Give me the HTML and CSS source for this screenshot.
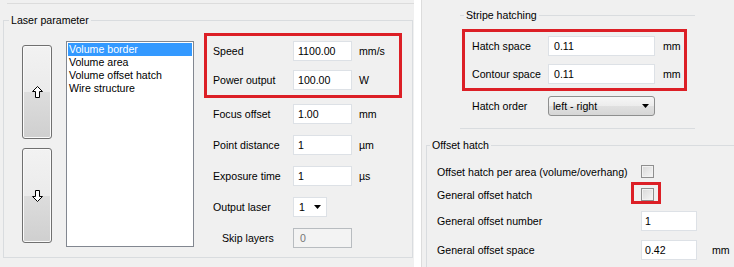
FILE: index.html
```html
<!DOCTYPE html>
<html>
<head>
<meta charset="utf-8">
<link rel="stylesheet" href="styles.css">
</head>
<body>
<div class="screen">
  <section class="panel panel-left">
    <div class="topline"></div>
    <div class="group group-laser">
      <span class="group-title">Laser parameter</span>
      <div class="movers">
        <button class="btn btn-up" type="button">
          <svg width="11" height="12" viewBox="0 0 11 12"><path d="M5.5 .5 L10.5 5.5 H7.5 V11.5 H3.5 V5.5 H.5 Z" fill="#fff" stroke="#000" stroke-width="1"/></svg>
        </button>
        <button class="btn btn-down" type="button">
          <svg width="11" height="12" viewBox="0 0 11 12"><path d="M5.5 11.5 L10.5 6.5 H7.5 V.5 H3.5 V6.5 H.5 Z" fill="#fff" stroke="#000" stroke-width="1"/></svg>
        </button>
      </div>
      <ul class="listbox">
        <li class="sel">Volume border</li>
        <li>Volume area</li>
        <li>Volume offset hatch</li>
        <li>Wire structure</li>
      </ul>
      <div class="form">
        <div class="red">
          <div class="row"><span>Speed</span><span class="field">1100.00</span><span>mm/s</span></div>
          <div class="row"><span>Power output</span><span class="field">100.00</span><span>W</span></div>
        </div>
        <div class="row"><span>Focus offset</span><span class="field">1.00</span><span>mm</span></div>
        <div class="row"><span>Point distance</span><span class="field">1</span><span>µm</span></div>
        <div class="row"><span>Exposure time</span><span class="field">1</span><span>µs</span></div>
        <div class="row"><span>Output laser</span><span class="mini-combo"><span>1</span><svg class="tri" width="7" height="4" viewBox="0 0 7 4"><polygon points="0,0 7,0 3.5,4" fill="#000"/></svg></span><span></span></div>
        <div class="row"><span class="indent">Skip layers</span><span class="field disabled">0</span><span></span></div>
      </div>
    </div>
  </section>
  <div class="gap"></div>
  <section class="panel panel-right">
    <div class="group stripe">
      <span class="group-title">Stripe hatching</span>
      <div class="red">
        <div class="row"><span>Hatch space</span><span class="field">0.11</span><span>mm</span></div>
        <div class="row"><span>Contour space</span><span class="field">0.11</span><span>mm</span></div>
      </div>
      <div class="row"><span>Hatch order</span><span class="combo"><span>left - right</span><svg class="tri" width="7" height="4" viewBox="0 0 7 4"><polygon points="0,0 7,0 3.5,4" fill="#000"/></svg></span><span></span></div>
    </div>
    <div class="group offset">
      <span class="group-title">Offset hatch</span>
      <div class="row r-check"><span>Offset hatch per area (volume/overhang)</span><span class="cell"><span class="check"></span></span><span></span></div>
      <div class="row r-check"><span>General offset hatch</span><span class="cell"><span class="check"><span class="ring"></span></span></span><span></span></div>
      <div class="row r-num"><span>General offset number</span><span class="field">1</span><span></span></div>
      <div class="row r-space"><span>General offset space</span><span class="field">0.42</span><span>mm</span></div>
    </div>
  </section>
</div>
</body>
</html>
```

FILE: styles.css
```css
* { box-sizing: border-box; }
html, body { margin: 0; padding: 0; }
body {
  width: 734px;
  height: 267px;
  overflow: hidden;
  background: #fff;
  font-family: "Liberation Sans", Arial, sans-serif;
  font-size: 10.6px;
  color: #000;
}
.screen { display: flex; height: 267px; }
.panel { background: #f0f0f0; height: 267px; }
.panel-left { width: 414px; padding-top: 3px; }
.topline { margin-left: 7px; border-top: 1px solid #dcdcdc; }
.gap { width: 7px; background: #fff; }
.panel-right { width: 313px; border-left: 1px solid #dcdcdc; }

.group { position: relative; border: 1px solid #d9dcdf; }
.group-title {
  position: absolute;
  top: -7px;
  line-height: 13px;
  padding: 0 2px;
  background: #f0f0f0;
  white-space: nowrap;
}

/* left group */
.group-laser {
  margin: 16px 0 0 3px;
  width: 410px;
  height: 238px;
  display: flex;
  align-items: flex-start;
}
.group-laser .group-title { left: 5px; }

.movers {
  margin: 24px 0 0 18px;
  display: flex;
  flex-direction: column;
  gap: 9px;
}
.btn {
  width: 30px;
  padding: 0;
  border: 1px solid #707070;
  border-radius: 3px;
  background: linear-gradient(#f2f2f2 0%, #ebebeb 50%, #dddddd 50%, #cfcfcf 100%);
  box-shadow: inset 0 0 0 1px #fafafa;
  display: flex;
  align-items: center;
  justify-content: center;
}
.btn-up { height: 94px; }
.btn-down { height: 95px; }

.listbox {
  margin: 20px 0 0 14px;
  padding: 1px;
  width: 128px;
  height: 206px;
  border: 1px solid #828790;
  background: #fff;
  list-style: none;
}
.listbox li {
  height: 13px;
  line-height: 13px;
  padding-left: 1px;
  white-space: nowrap;
}
.listbox li.sel { background: #3399ff; color: #fff; }

.form { margin: 12px 0 0 10px; width: 198px; }
.red { border: 3px solid #dc1f26; }
.form .red { padding-left: 6px; }
.row { display: grid; align-items: center; white-space: nowrap; }
.form .row {
  grid-template-columns: 73px 59px auto;
  column-gap: 7px;
  height: 31px;
}
.form .red .row:first-child { height: 29px; }
.form .red .row:last-child { height: 30px; }
.form > .row { margin-left: 9px; }
.indent { padding-left: 9px; }

.field {
  height: 20px;
  border: 1px solid #dde1e6;
  background: #fff;
  padding-left: 4px;
  line-height: 18px;
}
.field.disabled {
  background: #f3f3f3;
  border-color: #b8bcc0;
  color: #777;
  padding-left: 6px;
}
.mini-combo {
  width: 34px;
  height: 20px;
  border: 1px solid #dde1e6;
  background: #fff;
  display: flex;
  align-items: center;
  justify-content: space-between;
  padding: 0 5px 0 5px;
}
.tri { display: block; }

/* right panel */
.stripe {
  margin: 15px 0 0 38px;
  width: 235px;
  height: 114px;
  border-left: none;
  border-right: none;
}
.stripe .group-title { left: 4px; }
.stripe .red { margin: 13px 0 0 2px; width: 225px; padding-left: 7px; }
.stripe .row {
  grid-template-columns: 68px 107px auto;
  column-gap: 8px;
  height: 28px;
}
.stripe > .row { margin-left: 12px; height: 30px; }
.stripe .field { padding-left: 5px; }
.combo {
  height: 20px;
  border: 1px solid #8e8f8f;
  border-radius: 3px;
  background: linear-gradient(#f6f6f6 0%, #ececec 50%, #e0e0e0 50%, #d6d6d6 100%);
  display: flex;
  align-items: center;
  justify-content: space-between;
  padding: 0 5px 0 4px;
}

.offset {
  margin: 16px 0 0 4px;
  height: 130px;
  border-right: none;
  border-bottom: none;
  padding: 14px 0 0 10px;
}
.offset .group-title { left: 3px; }
.offset .row {
  grid-template-columns: 189px 56px auto;
  column-gap: 15px;
}
.offset .field { padding-left: 3px; }
.r-check { height: 23px; }
.r-num { height: 29px; }
.r-space { height: 30px; }
.cell { display: flex; align-items: center; }
.check {
  position: relative;
  display: block;
  width: 13px;
  height: 13px;
  border: 1px solid #8f8f8f;
  background: linear-gradient(135deg, #d8d8d8, #f6f6f6);
  box-shadow: inset 0 0 0 1px #f2f2f2;
}
.ring {
  position: absolute;
  left: -11px;
  top: -7px;
  width: 30px;
  height: 22px;
  border: 3px solid #dc1f26;
}
```
